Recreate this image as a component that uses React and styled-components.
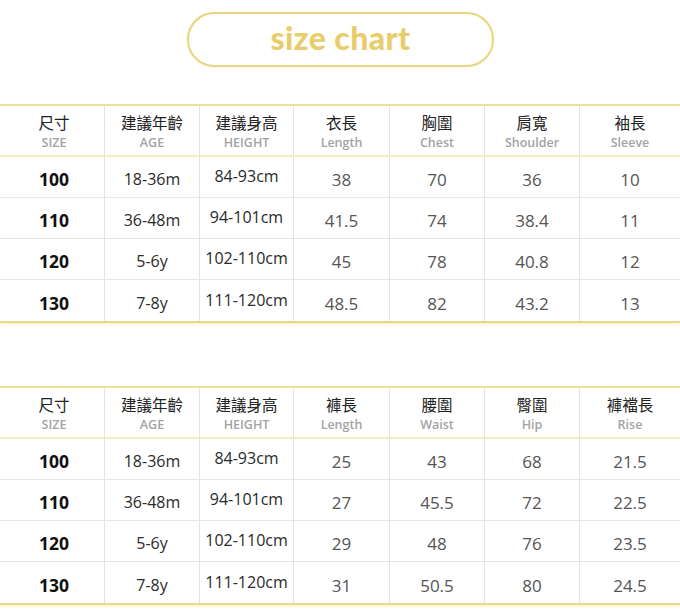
import React from 'react';
import styled, { createGlobalStyle } from 'styled-components';

const GlobalStyle = createGlobalStyle`
  html, body {
    margin: 0;
    padding: 0;
    background: #ffffff;
  }
  body {
    font-family: "Open Sans", "Noto Sans CJK TC", sans-serif;
  }
`;

const Page = styled.div`
  width: 680px;
  height: 615px;
  overflow: hidden;
  background: #fff;
  display: flex;
  flex-direction: column;
  padding-top: 12px;
  box-sizing: border-box;
`;

const TitleWrap = styled.div`
  display: flex;
  justify-content: center;
  margin-bottom: 37px;
  padding-left: 1px;
`;

const Pill = styled.div`
  width: 307px;
  height: 55px;
  border: 2.5px solid #e8d582;
  border-radius: 28px;
  box-shadow: 0 0 2px rgba(240, 225, 140, 0.6);
  display: flex;
  align-items: center;
  justify-content: center;
  font-family: "Lato", "DejaVu Sans", sans-serif;
  font-weight: 900;
  font-size: 32px;
  letter-spacing: 0.4px;
  color: #e9cd6c;
  padding-bottom: 4px;
  box-sizing: border-box;
`;

const Table = styled.div`
  display: grid;
  grid-template-columns: 104px 95px 94px 96px 95px 95px 1fr;
  border-top: 2px solid #ede08e;
  border-bottom: 2px solid #e6d88c;
  box-shadow: 0 2px 2px rgba(250, 245, 200, 0.9);
  margin-bottom: ${p => p.$gap || 0}px;
`;

const Cell = styled.div`
  display: flex;
  flex-direction: column;
  align-items: center;
  justify-content: center;
  height: ${p => (p.$head ? 49 : 40)}px;
  border-left: ${p => (p.$first ? 'none' : '1px solid #e3e3e3')};
  border-bottom: ${p =>
    p.$head ? '2px solid #f3edc4' : p.$last ? 'none' : '1px solid #e6e6e6'};
  box-sizing: content-box;
  padding-top: ${p => (p.$head ? 0 : p.$last ? 1 : 0)}px;
  padding-left: ${p => (p.$first ? 4 : 0)}px;
`;

const HeadZh = styled.span`
  font-family: "Noto Sans CJK TC", sans-serif;
  font-size: 15.5px;
  line-height: 20px;
  color: #222;
  margin-top: 2px;
`;

const HeadEn = styled.span`
  font-family: "Open Sans", sans-serif;
  font-size: 12.5px;
  font-weight: 600;
  line-height: 18px;
  color: #a3a3a3;
  margin-top: 2px;
`;

const Value = styled.span`
  font-family: "Open Sans", sans-serif;
  font-size: ${p => (p.$bold ? 17.5 : p.$dark ? 16 : 17)}px;
  font-weight: ${p => (p.$bold ? 700 : 400)};
  color: ${p => (p.$bold ? '#111' : p.$dark ? '#2a2a2a' : '#555')};
  transform: translateY(${p => p.$shift || 0}px);
`;

const baseHead = [
  ['尺寸', 'SIZE'],
  ['建議年齡', 'AGE'],
  ['建議身高', 'HEIGHT'],
];

const baseRows = [
  ['100', '18-36m', '84-93cm'],
  ['110', '36-48m', '94-101cm'],
  ['120', '5-6y', '102-110cm'],
  ['130', '7-8y', '111-120cm'],
];

const tops = {
  head: [['衣長', 'Length'], ['胸圍', 'Chest'], ['肩寬', 'Shoulder'], ['袖長', 'Sleeve']],
  rows: [
    ['38', '70', '36', '10'],
    ['41.5', '74', '38.4', '11'],
    ['45', '78', '40.8', '12'],
    ['48.5', '82', '43.2', '13'],
  ],
};

const bottoms = {
  head: [['褲長', 'Length'], ['腰圍', 'Waist'], ['臀圍', 'Hip'], ['褲襠長', 'Rise']],
  rows: [
    ['25', '43', '68', '21.5'],
    ['27', '45.5', '72', '22.5'],
    ['29', '48', '76', '23.5'],
    ['31', '50.5', '80', '24.5'],
  ],
};

function SizeTable({ data, gap }) {
  const head = [...baseHead, ...data.head];
  return (
    <Table $gap={gap}>
      {head.map(([zh, en], i) => (
        <Cell key={'h' + i} $head $first={i === 0}>
          <HeadZh>{zh}</HeadZh>
          <HeadEn>{en}</HeadEn>
        </Cell>
      ))}
      {baseRows.map((base, r) => {
        const row = [...base, ...data.rows[r]];
        const last = r === baseRows.length - 1;
        return row.map((v, i) => (
          <Cell key={r + '-' + i} $first={i === 0} $last={last}>
            <Value
              $bold={i === 0}
              $dark={i === 1 || i === 2}
              $shift={i === 2 ? -1 : 2}
            >
              {v}
            </Value>
          </Cell>
        ));
      })}
    </Table>
  );
}

export default function App() {
  return (
    <Page>
      <GlobalStyle />
      <TitleWrap>
        <Pill>size chart</Pill>
      </TitleWrap>
      <SizeTable data={tops} gap={63} />
      <SizeTable data={bottoms} />
    </Page>
  );
}
